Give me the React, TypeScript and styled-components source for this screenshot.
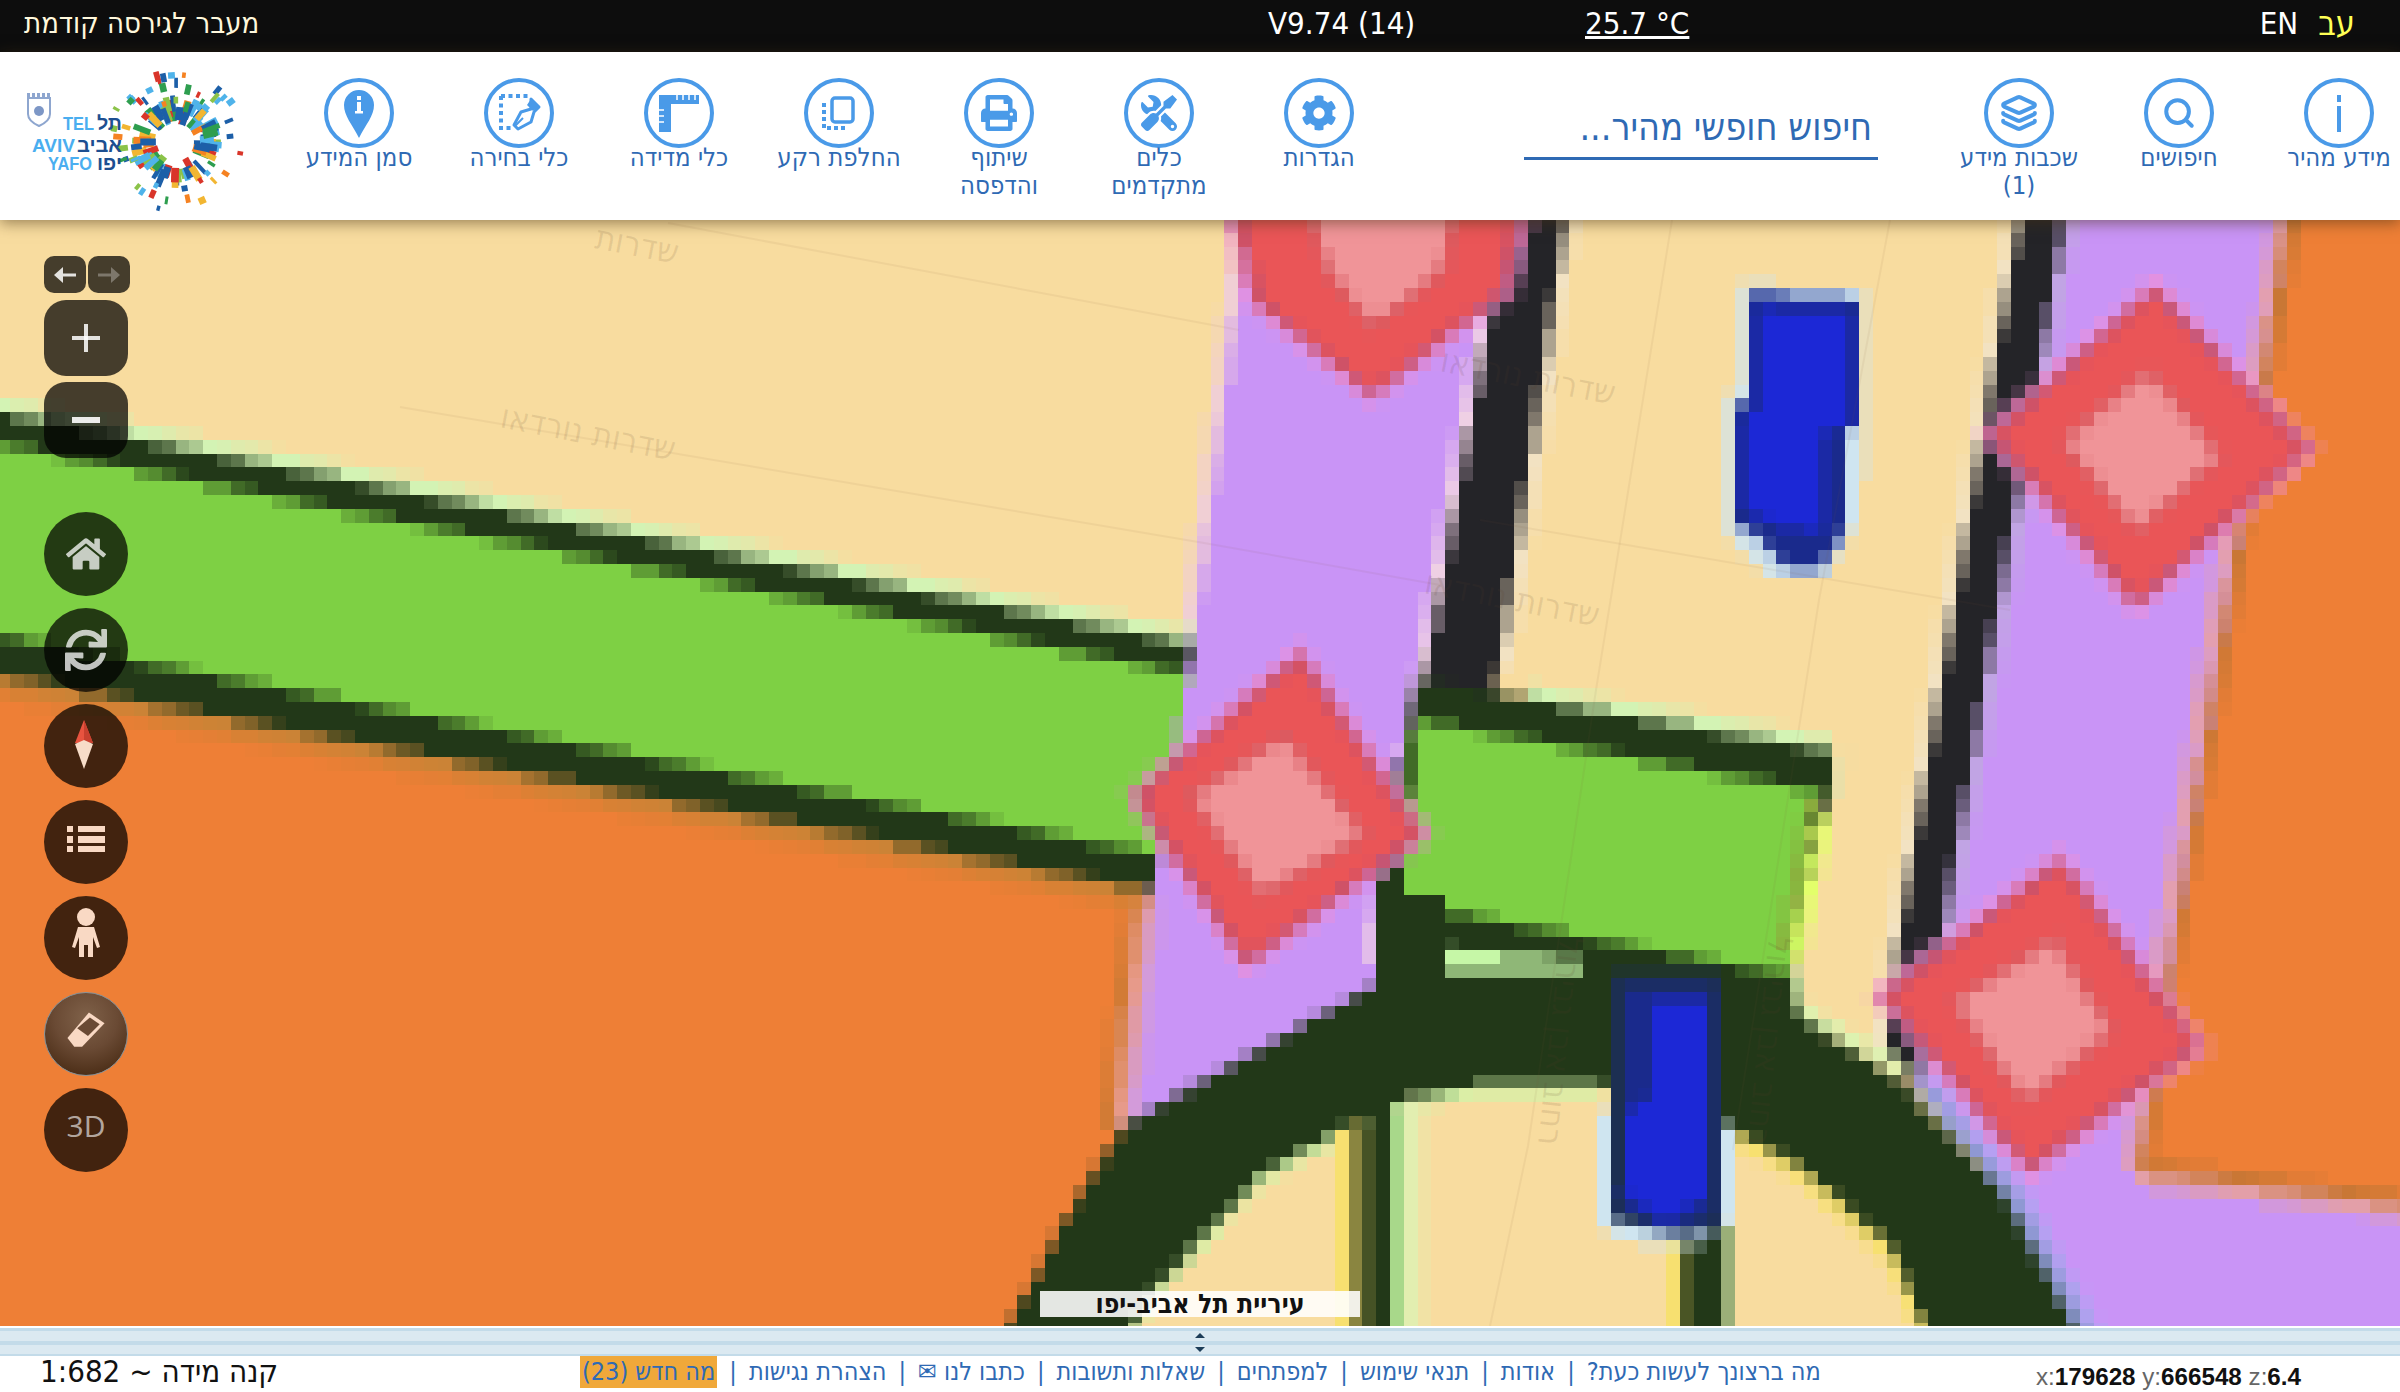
import React, { useMemo } from "react";
import styled, { createGlobalStyle } from "styled-components";
import { FaCog, FaHome, FaPrint, FaSync, FaTools } from "react-icons/fa";
import { Layers, Search } from "lucide-react";

const Global = createGlobalStyle`
  html, body { margin: 0; padding: 0; height: 100%; background: #fff; overflow: hidden; }
  #root { height: 100%; }
  * { box-sizing: border-box; }
`;

const HEB = `"DejaVu Sans Condensed", "DejaVu Sans", "Liberation Sans", sans-serif`;

const Page = styled.div`
  display: flex;
  flex-direction: column;
  width: 2400px;
  height: 1392px;
  font-family: ${HEB};
`;

const TopBar = styled.div`
  display: flex;
  align-items: center;
  height: 52px;
  flex: none;
  background: #0d0d0d;
  color: #fff;
  font-size: 31px;
  padding: 0 45px 6px 24px;
`;

const OldVersion = styled.a`
  width: 1244px;
  color: #fff8dc;
  font-size: 29px;
  direction: rtl;
  text-align: left;
`;

const Version = styled.span`
  width: 317px;
`;

const Weather = styled.span`
  text-decoration: underline;
`;

const Lang = styled.div`
  margin-left: auto;
  display: flex;
  gap: 20px;
`;

const LangOption = styled.span<{ $active?: boolean }>`
  color: ${(p) => (p.$active ? "#ffff55" : "#fff")};
  ${(p) => (p.$active ? "font-size: 34px; line-height: 36px;" : "")}
`;

const Toolbar = styled.div`
  position: relative;
  z-index: 5;
  display: flex;
  direction: rtl;
  align-items: flex-start;
  gap: 40px;
  height: 168px;
  flex: none;
  padding: 26px 1px 0 20px;
  background: #fff;
  box-shadow: 0 3px 14px rgba(70, 50, 20, 0.55);
`;

const Tool = styled.div`
  width: 120px;
  flex: none;
  display: flex;
  flex-direction: column;
  align-items: center;
  color: #2f6ab4;
  font-size: 25.500px;
  line-height: 28px;
  text-align: center;
  white-space: nowrap;
`;

const ToolCircle = styled.div`
  width: 70px;
  height: 70px;
  margin-bottom: -5px;
  border: 4px solid #4a9ae8;
  border-radius: 50%;
  display: flex;
  align-items: center;
  justify-content: center;
  color: #4a9ae8;
`;

const SearchBox = styled.div`
  width: 354px;
  height: 82px;
  flex: none;
  margin: 0 41px 0 105px;
  padding: 27px 6px 0 0;
  border-bottom: 3px solid #2f6ab4;
  color: #2f6ab4;
  font-size: 37.500px;
  line-height: 44px;
  white-space: nowrap;
`;

const Logo = styled.svg`
  position: absolute;
  left: 20px;
  top: 16px;
`;

const MapArea = styled.div`
  position: relative;
  flex: 1;
  overflow: hidden;
  background: #f8dc9f;
`;

const MapSvg = styled.svg`
  display: block;
  width: 100%;
  height: 100%;
`;

const Controls = styled.div`
  position: absolute;
  left: 44px;
  top: 36px;
  display: flex;
  flex-direction: column;
  width: 86px;
`;

const HistoryRow = styled.div`
  display: flex;
  gap: 2px;
  margin-bottom: 7px;
`;

const HistoryButton = styled.div<{ $dim?: boolean }>`
  width: 42px;
  height: 37px;
  border-radius: 10px;
  background: rgba(0, 0, 0, 0.72);
  display: flex;
  align-items: center;
  justify-content: center;
  color: ${(p) => (p.$dim ? "rgba(255,255,255,0.3)" : "rgba(255,255,255,0.85)")};
`;

const ZoomButton = styled.div`
  width: 84px;
  height: 76px;
  margin-bottom: 6px;
  border-radius: 22px;
  background: rgba(0, 0, 0, 0.72);
  display: flex;
  align-items: center;
  justify-content: center;
  color: rgba(255, 255, 255, 0.85);
`;

const RoundButton = styled.div<{ $lit?: boolean }>`
  width: 84px;
  height: 84px;
  margin-bottom: 12px;
  border-radius: 50%;
  display: flex;
  align-items: center;
  justify-content: center;
  color: rgba(255, 255, 255, 0.75);
  background: ${(p) =>
    p.$lit
      ? "radial-gradient(circle at 50% 30%, #7f6149 0%, #6a4a34 45%, #4e3019 80%, #7f8b90 100%)"
      : "rgba(0, 0, 0, 0.72)"};
  ${(p) => (p.$lit ? "border: 1px solid #84929a;" : "")}
`;

const ThreeD = styled.span`
  padding-bottom: 9px;
  color: rgba(255, 255, 255, 0.62);
  font-family: "Open Sans", sans-serif;
  font-size: 30px;
`;

const HomeGap = styled.div`
  height: 48px;
`;

const CityLabel = styled.div`
  position: absolute;
  left: 1040px;
  bottom: 9px;
  width: 320px;
  height: 26px;
  background: rgba(255, 255, 255, 0.88);
  color: #111;
  font-size: 26.500px;
  font-weight: 700;
  line-height: 26px;
  text-align: center;
  direction: rtl;
`;

const Splitter = styled.div`
  position: relative;
  height: 30px;
  flex: none;
  border-top: 2px solid #fff;
  background: linear-gradient(
    #c3dbe9 0 3px,
    #dbe9f1 3px 13px,
    #c3dbe9 13px 17px,
    #dbe9f1 17px 26px,
    #c3dbe9 26px
  );
`;

const SplitArrow = styled.div<{ $down?: boolean }>`
  position: absolute;
  left: 1195px;
  top: ${(p) => (p.$down ? "19px" : "5px")};
  width: 0;
  height: 0;
  border-left: 5px solid transparent;
  border-right: 5px solid transparent;
  ${(p) => (p.$down ? "border-top: 5px solid #1d3d58;" : "border-bottom: 5px solid #1d3d58;")}
`;

const Footer = styled.div`
  display: flex;
  align-items: flex-start;
  height: 36px;
  flex: none;
  background: #fff;
`;

const Scale = styled.div`
  width: 580px;
  padding-left: 40px;
  margin-top: -3px;
  color: #111;
  font-size: 31px;
  line-height: 36px;
`;

const Links = styled.div`
  display: flex;
  direction: rtl;
  width: 1456px;
  justify-content: flex-end;
  color: #2f6ab4;
  font-size: 25px;
  line-height: 32px;
  white-space: pre;
`;

const LinkSep = styled.span`
  margin: 0 12px;
`;

const WhatsNew = styled.span`
  background: #f0a83a;
  padding: 0 2px;
`;

const Coords = styled.div`
  padding-top: 8px;
  color: #666;
  font-family: "Liberation Sans", sans-serif;
  font-size: 24.200px;
  line-height: 26px;
  white-space: pre;
  b {
    color: #111;
  }
`;

// ---- map: polygons sampled onto the coarse tile grid, like an upscaled WMS image
type Pt = number[];
type Layer = { pts: Pt[]; rgb: number[]; a: number };

const CELL = 13.8;
const OX = 10;
const OY = 8;

const hex = (c: string) => [1, 3, 5].map((i) => parseInt(c.slice(i, i + 2), 16));
const poly = (c: string, pts: Pt[], a = 1): Layer => ({ pts, rgb: hex(c), a });
const edge = (c: string, path: Pt[], dx: number, dy: number, a = 1): Layer =>
  poly(c, [...path, ...[...path].reverse().map(([x, y]) => [x + dx, y + dy])], a);

const diamond = (outer: Pt[], inner: Pt[]): Layer[] => {
  const cx = outer.reduce((s, p) => s + p[0], 0) / outer.length;
  const cy = outer.reduce((s, p) => s + p[1], 0) / outer.length;
  const grow = (k: number) => outer.map(([x, y]) => [cx + (x - cx) * k, cy + (y - cy) * k]);
  const ix = inner.reduce((s, p) => s + p[0], 0) / inner.length;
  const iy = inner.reduce((s, p) => s + p[1], 0) / inner.length;
  return [
    poly("#ee8fd6", grow(1.14), 0.75),
    poly("#c2506f", grow(1.06)),
    poly("#ea5557", grow(0.98)),
    poly("#d85c62", inner.map(([x, y]) => [ix + (x - ix) * 1.14, iy + (y - iy) * 1.14])),
    poly("#f09498", inner),
  ];
};

// the avenue runs off the left edge of the page, so its polygons start at x = -40
const L = -40;
const ROAD_TOP: Pt[] = [[L, 405], [1200, 646]];
const ROAD_LOW: Pt[] = [[L, 668], [1150, 890]];
const MID_PURPLE_L: Pt[] = [[1248, 220], [1195, 630], [1150, 905], [1125, 1130]];
const MID_DARK_L: Pt[] = [[1507, 220], [1427, 670], [1375, 960]];
const MID_DARK_R: Pt[] = [[1565, 220], [1498, 670]];
const RIGHT_DARK_L: Pt[] = [[2019, 220], [1897, 947], [1885, 1050]];
const RIGHT_DARK_R: Pt[] = [[2064, 220], [1915, 1087]];
const RIGHT_ORANGE: Pt[] = [[2286, 220], [2219, 631], [2163, 982], [2137, 1172]];
const ORANGE_LOW: Pt[] = [[2137, 1172], [2440, 1210]];
const ARC_INNER_L: Pt[] = [[1125, 1340], [1156, 1288], [1263, 1173], [1345, 1127], [1406, 1100], [1472, 1086], [1600, 1086]];
const ARC_INNER_R: Pt[] = [[1722, 1123], [1804, 1169], [1892, 1248], [1930, 1340]];
const ARC_OUTER_R: Pt[] = [[1915, 1087], [2006, 1199], [2080, 1340]];
const B = 1340;

const LAYERS: Layer[] = [
  // left orange + green avenue
  edge("#d3f3b4", ROAD_TOP, 0, -15),
  poly("#ee7f36", [[L, 668], [1150, 890], [1125, 1130], [1002, B], [L, B]]),
  edge("#a98a3c", ROAD_LOW, 0, 13),
  edge("#d98033", ROAD_LOW, 0, 24, 0.7),
  poly("#223818", [[L, 405], [1200, 646], [1160, 890], [1150, 890], [L, 668]]),
  poly("#7ed044", [[L, 436], [1200, 676], [1160, 855], [L, 628]]),
  // right orange
  poly("#ee7f36", [[2286, 220], [2440, 220], [2440, 1210], [2137, 1172]]),
  edge("#c97735", RIGHT_ORANGE, 14, 0),
  edge("#c97735", ORANGE_LOW, 0, -13),
  // purple strips
  edge("#f0cfd4", MID_PURPLE_L.slice(0, 2), -14, 0),
  edge("#c97a35", MID_PURPLE_L.slice(2), -26, 0, 0.75),
  edge("#e79a8a", MID_PURPLE_L.slice(2), -13, 0),
  poly("#c994f6", [[1248, 220], [1511, 220], [1431, 670], [1375, 960], [1375, 990], [1280, 1040], [1125, 1130], [1150, 905], [1195, 630]]),
  edge("#d9a0c8", MID_PURPLE_L.slice(2), 13, 0, 0.6),
  edge("#efd0e4", MID_DARK_L, -12, 0),
  poly("#c994f6", [[2064, 220], [2286, 220], [2137, 1172], [2440, 1210], [2440, B], [2080, B], [2006, 1199], [1915, 1087]]),
  edge("#e39fb0", RIGHT_ORANGE, -14, 0),
  edge("#e39fa8", ORANGE_LOW, 0, 14),
  edge("#c1a4e4", RIGHT_DARK_R, 14, 0),
  // dark side roads
  edge("#f2e2c2", MID_DARK_R, 13, 0),
  edge("#f2e2c2", RIGHT_DARK_L, -13, 0),
  poly("#242428", [MID_DARK_L[0], MID_DARK_R[0], MID_DARK_R[1], [1493, 705], [1422, 705], MID_DARK_L[1]]),
  poly("#242428", [RIGHT_DARK_L[0], RIGHT_DARK_R[0], RIGHT_DARK_R[1], RIGHT_DARK_L[2], RIGHT_DARK_L[1]]),
  // green block between the roads
  edge("#d3f3b4", [[1530, 700], [1830, 751]], 0, -15),
  edge("#eadfa8", [[1835, 751], [1830, 800]], 14, 0),
  poly("#223818", [[1416, 680], [1830, 751], [1830, 793], [1791, 975], [1400, 975], [1375, 900]]),
  poly("#c6f7a7", [[1447, 948], [1582, 960], [1582, 975], [1447, 975]]),
  poly("#7ed044", [[1416, 720], [1830, 793], [1818, 793], [1790, 972], [1770, 972], [1403, 903]]),
  edge("#e3ff6b", [[1832, 815], [1804, 960]], -14, 0),
  edge("#8fa63c", [[1818, 800], [1790, 950]], -12, 0, 0.8),
  // big arc
  edge("#d3f3a8", ARC_INNER_L, 0, 12),
  edge("#f7e070", ARC_INNER_R, -8, 12),
  edge("#ddf2b0", [[1791, 975], [1799, 1017], [1900, 1075]], 8, -12),
  poly("#223818", [
    [1002, B], [1071, 1209], [1125, 1125], [1375, 985], [1375, 893], [1447, 893], [1447, 948], [1447, 975], [1791, 975], [1799, 1017], [1900, 1081],
    ...ARC_OUTER_R.slice(1),
    [1930, B], [1892, 1248], [1804, 1169], [1722, 1123], [1600, 1086], [1472, 1086], [1406, 1100], [1345, 1127], [1263, 1173], [1156, 1288], [1125, B],
  ]),
  edge("#3f6f82", ARC_OUTER_R, 12, -4, 0.6),
  edge("#9fb0ee", ARC_OUTER_R, 24, -6, 0.5),
  // vertical lanes below the arc
  poly("#f7e070", [[1335, 1130], [1349, 1130], [1349, B], [1335, B]]),
  poly("#8a8540", [[1349, 1120], [1365, 1120], [1365, B], [1349, B]]),
  poly("#223818", [[1365, 1090], [1391, 1090], [1391, B], [1365, B]]),
  poly("#a8d88a", [[1391, 1110], [1405, 1110], [1405, B], [1391, B]]),
  poly("#e2eeb0", [[1405, 1098], [1420, 1098], [1420, B], [1405, B]]),
  poly("#f7e070", [[1668, 1240], [1682, 1240], [1682, B], [1668, B]]),
  poly("#4a5525", [[1682, 1230], [1695, 1230], [1695, B], [1682, B]]),
  poly("#223818", [[1695, 1225], [1724, 1225], [1724, B], [1695, B]]),
  poly("#d8eaa8", [[1724, 1225], [1736, 1225], [1736, B], [1724, B]]),
  // blue pools
  poly("#cfe5f0", [[1599, 1112], [1733, 1127], [1733, 1222], [1700, 1244], [1620, 1242], [1599, 1226]]),
  poly("#1c2f52", [[1611, 975], [1722, 975], [1722, 1230], [1680, 1236], [1611, 1220]]),
  poly("#1a2a8c", [[1625, 987], [1712, 987], [1712, 1215], [1665, 1230], [1622, 1205]]),
  poly("#1c28d6", [[1652, 1000], [1708, 1000], [1708, 1195], [1665, 1222], [1625, 1195], [1625, 1115], [1652, 1095]]),
  poly("#cfe5f0", [[1738, 284], [1866, 290], [1866, 440], [1856, 530], [1825, 578], [1770, 578], [1728, 535], [1726, 395], [1738, 390]]),
  poly("#1a2a8c", [[1748, 292], [1857, 300], [1857, 427], [1844, 430], [1844, 530], [1830, 555], [1817, 570], [1790, 570], [1775, 557], [1748, 530], [1735, 525], [1735, 403], [1748, 403]]),
  poly("#1c28d6", [[1758, 308], [1848, 312], [1848, 427], [1822, 430], [1822, 532], [1775, 525], [1746, 510], [1746, 415], [1758, 410]]),
  // red roundabouts
  ...diamond([[1230, 170], [1525, 170], [1500, 290], [1373, 390], [1260, 300]], [[1302, 170], [1458, 170], [1440, 270], [1373, 322], [1330, 270]]),
  ...diamond([[1299, 660], [1416, 834], [1248, 958], [1141, 797]], [[1284, 740], [1360, 834], [1263, 891], [1194, 797]]),
  ...diamond([[2154, 294], [2301, 449], [2137, 599], [1997, 435]], [[2148, 375], [2217, 456], [2137, 526], [2066, 442]]),
  ...diamond([[2060, 866], [2192, 1045], [2030, 1164], [1888, 996]], [[2053, 943], [2108, 1031], [2026, 1098], [1957, 1003]]),
];

const inside = (pts: Pt[], x: number, y: number) => {
  let hit = false;
  for (let i = 0, j = pts.length - 1; i < pts.length; j = i++) {
    const [xi, yi] = pts[i];
    const [xj, yj] = pts[j];
    if (yi > y !== yj > y && x < ((xj - xi) * (y - yi)) / (yj - yi) + xi) hit = !hit;
  }
  return hit;
};

const sample = (x: number, y: number) => {
  let c = [248, 220, 159];
  for (const l of LAYERS) {
    if (inside(l.pts, x, y)) c = c.map((v, i) => v + (l.rgb[i] - v) * l.a);
  }
  return c;
};

const tileRuns = () => {
  const runs: { x: number; y: number; w: number; fill: string }[] = [];
  const SUB = 3;
  for (let r = 0; r < 82; r++) {
    const y = 211 + OY - CELL + r * CELL;
    let start = OX - CELL;
    let last = "";
    for (let k = 0; k < 176; k++) {
      const x = OX - CELL + k * CELL;
      const sum = [0, 0, 0];
      for (let a = 0; a < SUB; a++) {
        for (let b = 0; b < SUB; b++) {
          const s = sample(x + ((a + 0.5) * CELL) / SUB, y + ((b + 0.5) * CELL) / SUB);
          s.forEach((v, i) => (sum[i] += v));
        }
      }
      const fill = `rgb(${sum.map((v) => Math.round(v / (SUB * SUB))).join(",")})`;
      if (fill !== last) {
        if (last) runs.push({ x: start, y, w: x - start, fill: last });
        start = x;
        last = fill;
      }
    }
    runs.push({ x: start, y, w: OX - CELL + 176 * CELL - start, fill: last });
  }
  return runs;
};

const MapCanvas: React.FC = () => {
  const runs = useMemo(tileRuns, []);
  const lineStroke = "rgba(130,90,50,0.07)";
  const labelFill = "rgba(90,60,40,0.12)";
  return (
    <MapSvg viewBox="0 220 2400 1106" shapeRendering="crispEdges">
      {runs.map((r, i) => (
        <rect key={i} x={r.x} y={r.y} width={r.w + 0.5} height={CELL + 0.5} fill={r.fill} />
      ))}
      <g shapeRendering="auto" fill="none" stroke={lineStroke} strokeWidth="2">
        <path d="M400 407L1204 543L1440 585" />
        <path d="M668 223L1239 330" />
        <path d="M1672 220L1596 690L1528 1146L1490 1326" />
        <path d="M1890 220L1819 600L1733 1150" />
        <path d="M1480 520L2010 610" />
      </g>
      <g shapeRendering="auto" direction="rtl" fontFamily={HEB} fontSize="34" fill={labelFill}>
        <text x="586" y="444" transform="rotate(11 586 444)" textAnchor="middle">שדרות נורדאו</text>
        <text x="1526" y="388" transform="rotate(11 1526 388)" textAnchor="middle">שדרות נורדאו</text>
        <text x="1510" y="610" transform="rotate(11 1510 610)" textAnchor="middle">שדרות נורדאו</text>
        <text x="635" y="256" transform="rotate(11 635 256)" textAnchor="middle">שדרות</text>
        <text x="1549" y="1040" transform="rotate(96 1549 1040)" textAnchor="middle">רחוב אבן גבירול</text>
        <text x="1758" y="1040" transform="rotate(96 1758 1040)" textAnchor="middle">רחוב אבן גבירול</text>
      </g>
    </MapSvg>
  );
};

// ---- logo burst
const BURST = ["#f58220", "#2e9e4f", "#1f5fa8", "#4fb3ea", "#f2b632", "#d9352a", "#8bc34a", "#1f5fa8", "#4fb3ea"];

const burstTiles = () => {
  const tiles: { x: number; y: number; w: number; h: number; rot: number; fill: string }[] = [];
  let seed = 7;
  const rnd = () => {
    seed = (seed * 16807) % 2147483647;
    return seed / 2147483647;
  };
  for (let i = 0; i < 150; i++) {
    const ang = rnd() * Math.PI * 2;
    const near = i < 100;
    const rad = near ? 24 + rnd() * 16 : 40 + rnd() * 30;
    tiles.push({
      x: 156 + Math.cos(ang) * rad,
      y: 74 + Math.sin(ang) * rad * 0.98,
      w: near ? 10 + rnd() * 8 : 5 + rnd() * 6,
      h: near ? 4 + rnd() * 4 : 3 + rnd() * 4,
      rot: (ang * 180) / Math.PI,
      fill: BURST[Math.floor(rnd() * BURST.length)],
    });
  }
  return tiles;
};

const CityLogo: React.FC = () => {
  const tiles = useMemo(burstTiles, []);
  return (
    <Logo width="240" height="150" viewBox="0 0 240 150" direction="ltr">
      <defs>
        <filter id="soft">
          <feGaussianBlur stdDeviation="0.7" />
        </filter>
      </defs>
      <g filter="url(#soft)">
        {tiles.map((t, i) => (
          <rect key={i} x={t.x - t.w / 2} y={t.y - t.h / 2} width={t.w} height={t.h} fill={t.fill} transform={`rotate(${t.rot} ${t.x} ${t.y})`} />
        ))}
        <circle cx="156" cy="74" r="18" fill="#fff" />
        <path d="M8 30h22v16q0 7-11 12q-11-5-11-12z" fill="#fff" stroke="#8ea6cf" strokeWidth="2" />
        <path d="M7 27h24" stroke="#8ea6cf" strokeWidth="4" strokeDasharray="3 2" />
        <circle cx="19" cy="43" r="5" fill="#7d97c6" />
      </g>
      <g fontFamily={`"Liberation Sans", sans-serif`} fontWeight="700" fontSize="19">
        <text x="43" y="62" fill="#4aaef0" textLength="31" lengthAdjust="spacingAndGlyphs">TEL</text>
        <text x="12" y="84" fill="#4aaef0" textLength="43" lengthAdjust="spacingAndGlyphs">AVIV</text>
        <text x="28" y="102" fill="#4aaef0" textLength="44" lengthAdjust="spacingAndGlyphs">YAFO</text>
        <text x="77" y="62" fill="#1d4f91" textLength="25" lengthAdjust="spacingAndGlyphs">תל</text>
        <text x="57" y="84" fill="#1d4f91" textLength="45" lengthAdjust="spacingAndGlyphs">אביב</text>
        <text x="77" y="102" fill="#1d4f91" textLength="25" lengthAdjust="spacingAndGlyphs">יפו</text>
      </g>
    </Logo>
  );
};

// ---- drawn icons
const InfoIcon = () => (
  <svg width="40" height="48" viewBox="0 0 40 48" fill="currentColor">
    <rect x="18" y="6" width="4" height="7" />
    <rect x="18" y="17" width="4" height="26" />
  </svg>
);

const BackgroundIcon = () => (
  <svg width="44" height="48" viewBox="0 0 44 48" fill="none" stroke="currentColor">
    <rect x="15" y="9" width="21" height="24" rx="3" strokeWidth="3.5" />
    <path d="M7 14v25h22" strokeWidth="4" strokeDasharray="4 3" />
  </svg>
);

const MeasureIcon = () => (
  <svg width="46" height="50" viewBox="0 0 46 50" fill="currentColor">
    <path d="M3 7h40v9H15v28H3z" />
    <g stroke="#fff" strokeWidth="1.5">
      <path d="M21 7v5M27 7v5M33 7v5M39 7v5M3 22h5M3 28h5M3 34h5" />
    </g>
  </svg>
);

const SelectIcon = () => (
  <svg width="48" height="48" viewBox="0 0 48 48">
    <path d="M6 7h28M6 7v32h10" fill="none" stroke="currentColor" strokeWidth="4" strokeDasharray="4 3.5" />
    <path d="M36 10l8 8l-5 5l-3 10l-13 7l-4-4l7-13l10-3z" fill="#fff" stroke="currentColor" strokeWidth="3" strokeLinejoin="round" />
    <path d="M20 37l8-8" stroke="currentColor" strokeWidth="2" />
    <path d="M36 10l8 8l-6 4l-6-6z" fill="currentColor" />
  </svg>
);

const MarkerIcon = () => (
  <svg width="40" height="54" viewBox="0 0 40 54">
    <path d="M20 52C13 38 5 30 5 19a15 15 0 0 1 30 0c0 11-8 19-15 33z" fill="currentColor" />
    <rect x="18" y="10" width="4" height="4" fill="#fff" />
    <rect x="18" y="16" width="4" height="11" fill="#fff" />
    <rect x="16" y="25" width="8" height="2.5" fill="#fff" />
  </svg>
);

const ArrowIcon: React.FC<{ flip?: boolean }> = ({ flip }) => (
  <svg width="24" height="18" viewBox="0 0 24 18" style={flip ? { transform: "scaleX(-1)" } : undefined}>
    <path d="M1 9l9-8v6.500h13v3H10V17z" fill="currentColor" />
  </svg>
);

const PlusIcon = () => (
  <svg width="30" height="30" viewBox="0 0 30 30" fill="currentColor">
    <rect x="13" y="1" width="4" height="28" />
    <rect x="1" y="13" width="28" height="4" />
  </svg>
);

const MinusIcon = () => (
  <svg width="30" height="8" viewBox="0 0 30 8" fill="#fff" opacity="0.9">
    <rect x="1" y="1" width="28" height="6" />
  </svg>
);

const CompassIcon = () => (
  <svg width="84" height="84" viewBox="0 0 84 84">
    <path d="M40 16l-9 23h18z" fill="#e8533f" />
    <path d="M40 16l9 23h-9z" fill="#c8402f" />
    <path d="M31 40l9 25l9-25l-9-4z" fill="#f7dcc8" />
  </svg>
);

const ListIcon = () => (
  <svg width="84" height="84" viewBox="0 0 84 84" fill="#f9d9c4">
    <rect x="23" y="26" width="6" height="6" />
    <rect x="34" y="26" width="27" height="6" />
    <rect x="23" y="36" width="6" height="7" />
    <rect x="34" y="36" width="27" height="7" />
    <rect x="23" y="46" width="6" height="6" />
    <rect x="34" y="46" width="27" height="6" />
  </svg>
);

const PersonIcon = () => (
  <svg width="84" height="84" viewBox="0 0 84 84" fill="#f9d9c4">
    <circle cx="42" cy="21" r="9" />
    <path d="M34 31h16l6 20l-3 1l-4-11v20h-5V49h-4v12h-5V41l-4 11l-3-1z" />
  </svg>
);

const EraserIcon = () => (
  <svg width="84" height="84" viewBox="0 0 84 84">
    <path d="M45 20l16 11l-23 24h-8l-7-9z" fill="#f9d9c4" />
    <path d="M46 25l10 7l-12 12l-11-8z" fill="#6a4a34" />
  </svg>
);

const tools = [
  { key: "info", label: "מידע מהיר", icon: <InfoIcon /> },
  { key: "search", label: "חיפושים", icon: <Search size={34} strokeWidth={2.8} /> },
  { key: "layers", label: "שכבות מידע", sub: "(1)", icon: <Layers size={38} strokeWidth={2.6} /> },
];

const moreTools = [
  { key: "settings", label: "הגדרות", icon: <FaCog size={36} /> },
  { key: "advanced", label: "כלים", sub: "מתקדמים", icon: <FaTools size={36} style={{ transform: "scaleX(-1)" }} /> },
  { key: "print", label: "שיתוף", sub: "והדפסה", icon: <FaPrint size={36} /> },
  { key: "background", label: "החלפת רקע", icon: <BackgroundIcon /> },
  { key: "measure", label: "כלי מדידה", icon: <MeasureIcon /> },
  { key: "select", label: "כלי בחירה", icon: <SelectIcon /> },
  { key: "marker", label: "סמן המידע", icon: <MarkerIcon /> },
];

const footerLinks = ["מה ברצונך לעשות כעת?", "אודות", "תנאי שימוש", "למפתחים", "שאלות ותשובות", "כתבו לנו ✉", "הצהרת נגישות"];

const renderTool = (t: { key: string; label: string; sub?: string; icon: React.ReactNode }) => (
  <Tool key={t.key}>
    <ToolCircle>{t.icon}</ToolCircle>
    {t.label}
    {t.sub && <span>{t.sub}</span>}
  </Tool>
);

export default function App() {
  return (
    <Page>
      <Global />
      <TopBar>
        <OldVersion>מעבר לגירסה קודמת</OldVersion>
        <Version>V9.74 (14)</Version>
        <Weather>25.7 °C</Weather>
        <Lang>
          <span>EN</span>
          <LangOption $active>עב</LangOption>
        </Lang>
      </TopBar>
      <Toolbar>
        {tools.map(renderTool)}
        <SearchBox>חיפוש חופשי מהיר...</SearchBox>
        {moreTools.map(renderTool)}
        <CityLogo />
      </Toolbar>
      <MapArea>
        <MapCanvas />
        <Controls>
          <HistoryRow>
            <HistoryButton>
              <ArrowIcon />
            </HistoryButton>
            <HistoryButton $dim>
              <ArrowIcon flip />
            </HistoryButton>
          </HistoryRow>
          <ZoomButton>
            <PlusIcon />
          </ZoomButton>
          <ZoomButton>
            <MinusIcon />
          </ZoomButton>
          <HomeGap />
          <RoundButton>
            <FaHome size={40} />
          </RoundButton>
          <RoundButton>
            <FaSync size={42} />
          </RoundButton>
          <RoundButton>
            <CompassIcon />
          </RoundButton>
          <RoundButton>
            <ListIcon />
          </RoundButton>
          <RoundButton>
            <PersonIcon />
          </RoundButton>
          <RoundButton $lit>
            <EraserIcon />
          </RoundButton>
          <RoundButton>
            <ThreeD>3D</ThreeD>
          </RoundButton>
        </Controls>
        <CityLabel>עיריית תל אביב-יפו</CityLabel>
      </MapArea>
      <Splitter>
        <SplitArrow />
        <SplitArrow $down />
      </Splitter>
      <Footer>
        <Scale>1:682 ~ קנה מידה</Scale>
        <Links>
          {footerLinks.map((l) => (
            <span key={l}>
              {l}
              <LinkSep>|</LinkSep>
            </span>
          ))}
          <WhatsNew>מה חדש (23)</WhatsNew>
        </Links>
        <Coords>
          x:<b>179628</b> y:<b>666548</b> z:<b>6.4</b>
        </Coords>
      </Footer>
    </Page>
  );
}
